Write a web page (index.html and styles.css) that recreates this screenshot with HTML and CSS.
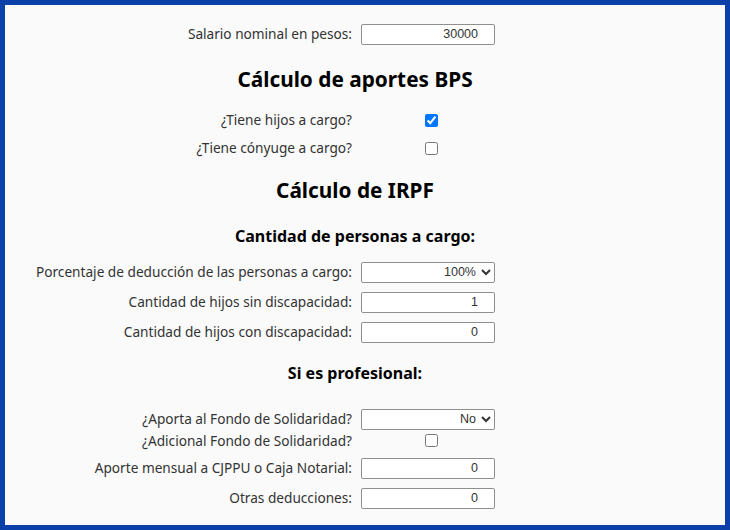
FILE: index.html
```html
<!DOCTYPE html>
<html lang="es">
<head>
<meta charset="utf-8">
<title>Cálculo de salario líquido</title>
<link rel="stylesheet" href="styles.css">
</head>
<body>
<div class="frame">
  <main class="page">
    <div class="row">
      <label class="label" for="salario">Salario nominal en pesos:</label>
      <input class="field" id="salario" type="text" value="30000">
    </div>

    <h2 class="title title-bps">Cálculo de aportes BPS</h2>
    <div class="row row-check">
      <label class="label" for="hijos">¿Tiene hijos a cargo?</label>
      <input class="check" id="hijos" type="checkbox" checked>
    </div>
    <div class="row row-check">
      <label class="label" for="conyuge">¿Tiene cónyuge a cargo?</label>
      <input class="check" id="conyuge" type="checkbox">
    </div>

    <h2 class="title title-irpf">Cálculo de IRPF</h2>
    <h3 class="subtitle subtitle-personas">Cantidad de personas a cargo:</h3>
    <div class="row">
      <label class="label" for="porcentaje">Porcentaje de deducción de las personas a cargo:</label>
      <select class="field select" id="porcentaje">
        <option>100%</option>
        <option>50%</option>
        <option>0%</option>
      </select>
    </div>
    <div class="row">
      <label class="label" for="sin">Cantidad de hijos sin discapacidad:</label>
      <input class="field" id="sin" type="text" value="1">
    </div>
    <div class="row">
      <label class="label" for="con">Cantidad de hijos con discapacidad:</label>
      <input class="field" id="con" type="text" value="0">
    </div>

    <h3 class="subtitle subtitle-prof">Si es profesional:</h3>
    <div class="row">
      <label class="label" for="fondo">¿Aporta al Fondo de Solidaridad?</label>
      <select class="field select" id="fondo">
        <option>No</option>
        <option>Sí</option>
      </select>
    </div>
    <div class="row row-check-tight">
      <label class="label" for="adicional">¿Adicional Fondo de Solidaridad?</label>
      <input class="check" id="adicional" type="checkbox">
    </div>
    <div class="row">
      <label class="label" for="cjppu">Aporte mensual a CJPPU o Caja Notarial:</label>
      <input class="field" id="cjppu" type="text" value="0">
    </div>
    <div class="row">
      <label class="label" for="otras">Otras deducciones:</label>
      <input class="field" id="otras" type="text" value="0">
    </div>
  </main>
</div>
</body>
</html>
```
FILE: styles.css
```css
html, body {
  margin: 0;
  padding: 0;
}

body {
  font-family: "Noto Sans", "Open Sans", sans-serif;
  color: #333;
}

.frame {
  box-sizing: border-box;
  width: 730px;
  height: 530px;
  border: 5px solid #0b40a8;
  background: #fafafa;
  overflow: hidden;
}

.page {
  width: 700px;
  padding-top: 14px;
}

.row {
  display: grid;
  grid-template-columns: 347px 134px;
  column-gap: 9px;
  align-items: center;
  height: 30px;
}

.row-check {
  height: 28px;
}

.row-check-tight {
  height: 19px;
  align-items: start;
}

.label {
  text-align: right;
  font-size: 13.65px;
  line-height: 18px;
  color: #333;
  white-space: nowrap;
}

.row-check-tight .label {
  line-height: 13px;
}

.field {
  box-sizing: border-box;
  height: 21px;
  width: 134px;
  margin: 0;
  border: 1px solid #8f8f8f;
  border-radius: 2px;
  background: #fff;
  font-family: "Liberation Sans", Arial, sans-serif;
  font-size: 12.5px;
  color: #333;
  text-align: right;
  padding: 0 16px 0 2px;
}

.select {
  padding: 0 2px 0 2px;
  text-align-last: right;
}

.check {
  justify-self: center;
  margin: 0 0 0 6px;
  width: 13px;
  height: 13px;
  accent-color: #0075ff;
}

.title {
  margin: 0;
  font-size: 20.8px;
  line-height: 28px;
  font-weight: 700;
  color: #000;
  text-align: center;
}

.title-bps {
  padding: 16px 0 13px;
}

.title-irpf {
  padding: 14px 0 14px;
}

.subtitle {
  margin: 0;
  font-size: 16px;
  line-height: 22px;
  font-weight: 700;
  color: #000;
  text-align: center;
}

.subtitle-personas {
  padding: 7px 0 10px;
}

.subtitle-prof {
  padding: 15px 0 20px;
}
```
